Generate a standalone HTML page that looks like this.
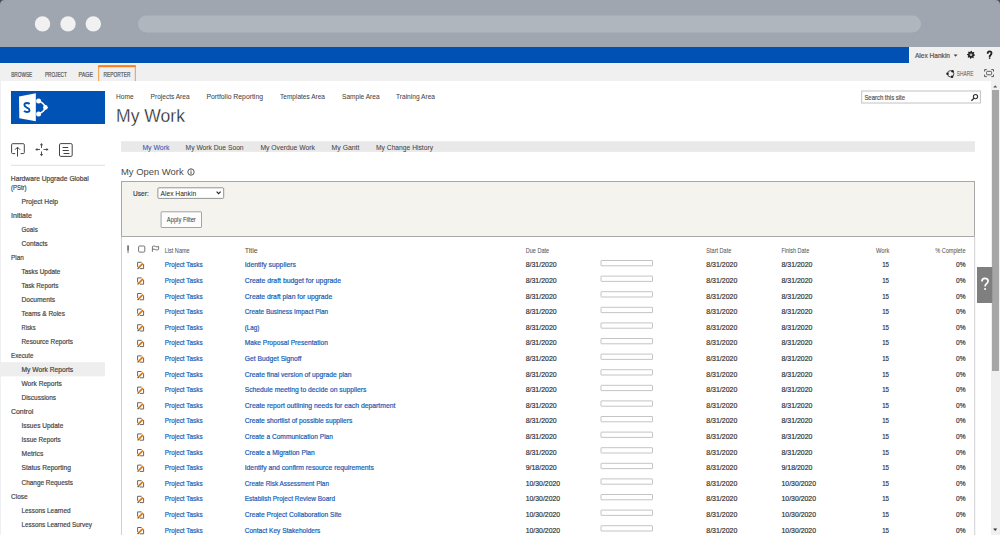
<!DOCTYPE html>
<html><head><meta charset="utf-8">
<style>
html,body{margin:0;padding:0;width:1000px;height:535px;overflow:hidden;background:#fff}
svg{display:block;font-family:"Liberation Sans", sans-serif}
</style></head><body>
<svg width="1000" height="535" viewBox="0 0 1000 535">
<rect x="0" y="0" width="1000" height="8" fill="#4b5057" />
<path d="M0 5 Q0 0 5 0 H995 Q1000 0 1000 5 V47 H0 Z" fill="#9fa6af"/>
<circle cx="42.5" cy="23.9" r="7.7" fill="#f1f1f1"/>
<circle cx="68" cy="23.9" r="7.7" fill="#f1f1f1"/>
<circle cx="93.3" cy="23.9" r="7.7" fill="#f1f1f1"/>
<rect x="138" y="15.5" width="783" height="17" rx="8.5" fill="#b0b6bd"/>
<rect x="0" y="47" width="1000" height="34" fill="#f0f0f0" />
<rect x="0" y="47" width="909" height="16" fill="#0051b3" />
<text x="915" y="57.5" font-size="6.8" fill="#555" textLength="35" lengthAdjust="spacingAndGlyphs"  stroke="#555" stroke-width="0.2">Alex Hankin</text>
<path d="M953.6 54.4 L957.6 54.4 L955.6 56.7 Z" fill="#444"/>
<path d="M975.00 54.80 L974.92 55.58 L973.77 55.95 L973.49 56.47 L973.83 57.63 L973.22 58.13 L972.15 57.57 L971.59 57.74 L971.00 58.80 L970.22 58.72 L969.85 57.57 L969.33 57.29 L968.17 57.63 L967.67 57.02 L968.23 55.95 L968.06 55.39 L967.00 54.80 L967.08 54.02 L968.23 53.65 L968.51 53.13 L968.17 51.97 L968.78 51.47 L969.85 52.03 L970.41 51.86 L971.00 50.80 L971.78 50.88 L972.15 52.03 L972.67 52.31 L973.83 51.97 L974.33 52.58 L973.77 53.65 L973.94 54.21 Z" fill="#222"/>
<circle cx="971" cy="54.8" r="1.4" fill="#bbb"/>
<path d="M987.7 53.7 Q987.7 51.4 989.6 51.4 Q991.5 51.4 991.5 53.3 Q991.5 54.5 990.4 55.2 Q989.6 55.8 989.6 56.9" fill="none" stroke="#222" stroke-width="1.8"/>
<circle cx="989.6" cy="58.1" r="0.85" fill="#222"/>
<text x="11.2" y="76.7" font-size="6.6" fill="#555" textLength="21" lengthAdjust="spacingAndGlyphs"  stroke="#555" stroke-width="0.2">BROWSE</text>
<text x="44.9" y="76.7" font-size="6.6" fill="#555" textLength="22" lengthAdjust="spacingAndGlyphs"  stroke="#555" stroke-width="0.2">PROJECT</text>
<text x="78.6" y="76.7" font-size="6.6" fill="#555" textLength="14.5" lengthAdjust="spacingAndGlyphs"  stroke="#555" stroke-width="0.2">PAGE</text>
<path d="M98.7 81 V66.2 H135.3 V81" fill="none" stroke="#f39a3a" stroke-width="1"/>
<rect x="98.2" y="65.2" width="37.6" height="2" fill="#f57c1f" />
<text x="103.6" y="76.7" font-size="6.6" fill="#555" textLength="26.8" lengthAdjust="spacingAndGlyphs"  stroke="#555" stroke-width="0.2">REPORTER</text>
<circle cx="950.7" cy="73.8" r="3.2" fill="none" stroke="#333" stroke-width="0.9"/>
<circle cx="952.54" cy="71.18" r="1.25" fill="#222"/>
<circle cx="947.50" cy="73.80" r="1.25" fill="#222"/>
<circle cx="952.05" cy="76.70" r="1.25" fill="#222"/>
<text x="956.8" y="75.9" font-size="6.4" fill="#555" textLength="16.8" lengthAdjust="spacingAndGlyphs" >SHARE</text>
<path d="M984.6 71.5 V69.6 H986.8 M991.3 69.6 H993.5 V71.5 M993.5 74.6 V76.6 H991.3 M986.8 76.6 H984.6 V74.6" fill="none" stroke="#555" stroke-width="1"/>
<rect x="986.6" y="71.3" width="5" height="3.5" rx="1" fill="none" stroke="#555" stroke-width="1"/>
<rect x="0" y="81" width="1" height="454" fill="#eef0f3" />
<rect x="991" y="81" width="9" height="454" fill="#f0f0f0" />
<path d="M993.2 87.6 L997.2 87.6 L995.2 85.2 Z" fill="#555"/>
<rect x="992" y="90" width="7" height="281" fill="#a6a6a6" />
<path d="M993.2 528.6 L997.2 528.6 L995.2 531 Z" fill="#333"/>
<rect x="11" y="91" width="94" height="33" fill="#0052b4" />
<path d="M19 96.6 L35.8 93.2 L35.8 121.3 L19.3 118.3 Z" fill="#fff"/>
<path d="M29.6 104.0 C28.9 103.3 28 102.95 26.9 102.95 C25.3 102.95 24.4 103.9 24.4 105.1 C24.4 106.5 25.6 107.0 26.9 107.6 C28.3 108.2 29.5 108.8 29.5 110.2 C29.5 111.4 28.5 112.0 26.9 112.0 C25.8 112.0 24.7 111.6 24.0 110.9" fill="none" stroke="#0052b4" stroke-width="1.9"/>
<path d="M38.6 100.9 Q44.3 103 45.4 107.4 Q44.3 111.8 38.6 113.9" fill="none" stroke="#fff" stroke-width="1.6"/>
<path d="M44.6 104.9 L47.9 107.4 L44.6 109.9 Z" fill="#fff"/>
<circle cx="38.6" cy="100.9" r="2.5" fill="#fff"/>
<circle cx="45.4" cy="107.4" r="2.3" fill="#fff"/>
<circle cx="38.6" cy="113.9" r="2.5" fill="#fff"/>
<g fill="none" stroke="#444" stroke-width="1"><path d="M15.2 153.6 H12.6 Q11.6 153.6 11.6 152.6 V144.7 Q11.6 143.7 12.6 143.7 H23.3 Q24.3 143.7 24.3 144.7 V152.6 Q24.3 153.6 23.3 153.6 H20.6"/><path d="M17.5 156.5 V147.3 M15 149.7 L17.5 147.2 L20 149.7"/><path d="M41.5 144.8 V148 M41.5 151.5 V154.8 M36.6 149.5 H40 M43.5 149.5 H47" stroke="#555"/><rect x="59.5" y="143.6" width="12.7" height="12.8" rx="1.3"/><path d="M62.6 147.5 H68.2 M62.6 150.5 H68.8 M63.5 153.5 H69.5"/></g>
<g fill="#444"><path d="M41.5 143 L39.9 145.2 H43.1 Z M41.5 156.2 L39.9 154 H43.1 Z M35.2 149.5 L37.4 147.9 V151.1 Z M48.6 149.5 L46.4 147.9 V151.1 Z"/></g>
<rect x="11" y="164.8" width="94" height="0.8" fill="#d6d6d6" />
<text x="10.8" y="181.3" font-size="7.4" fill="#444" textLength="78" lengthAdjust="spacingAndGlyphs"  stroke="#444" stroke-width="0.2">Hardware Upgrade Global</text>
<text x="10.9" y="189.9" font-size="7.4" fill="#444" textLength="15.7" lengthAdjust="spacingAndGlyphs"  stroke="#444" stroke-width="0.2">(PStr)</text>
<rect x="0" y="362.2" width="105" height="14.2" fill="#eeeeee" />
<text x="21.5" y="204.1" font-size="7.4" fill="#444" textLength="36.6" lengthAdjust="spacingAndGlyphs"  stroke="#444" stroke-width="0.2">Project Help</text>
<text x="11.0" y="218.12" font-size="7.4" fill="#444" textLength="20.9" lengthAdjust="spacingAndGlyphs"  stroke="#444" stroke-width="0.2">Initiate</text>
<text x="21.5" y="232.14" font-size="7.4" fill="#444" textLength="16.3" lengthAdjust="spacingAndGlyphs"  stroke="#444" stroke-width="0.2">Goals</text>
<text x="21.5" y="246.16" font-size="7.4" fill="#444" textLength="26.1" lengthAdjust="spacingAndGlyphs"  stroke="#444" stroke-width="0.2">Contacts</text>
<text x="11.0" y="260.18" font-size="7.4" fill="#444" textLength="12.7" lengthAdjust="spacingAndGlyphs"  stroke="#444" stroke-width="0.2">Plan</text>
<text x="21.5" y="274.2" font-size="7.4" fill="#444" textLength="38.9" lengthAdjust="spacingAndGlyphs"  stroke="#444" stroke-width="0.2">Tasks Update</text>
<text x="21.5" y="288.22" font-size="7.4" fill="#444" textLength="37.0" lengthAdjust="spacingAndGlyphs"  stroke="#444" stroke-width="0.2">Task Reports</text>
<text x="21.5" y="302.24" font-size="7.4" fill="#444" textLength="33.7" lengthAdjust="spacingAndGlyphs"  stroke="#444" stroke-width="0.2">Documents</text>
<text x="21.5" y="316.26" font-size="7.4" fill="#444" textLength="43.4" lengthAdjust="spacingAndGlyphs"  stroke="#444" stroke-width="0.2">Teams &amp; Roles</text>
<text x="21.5" y="330.28" font-size="7.4" fill="#444" textLength="14.0" lengthAdjust="spacingAndGlyphs"  stroke="#444" stroke-width="0.2">Risks</text>
<text x="21.5" y="344.3" font-size="7.4" fill="#444" textLength="51.4" lengthAdjust="spacingAndGlyphs"  stroke="#444" stroke-width="0.2">Resource Reports</text>
<text x="11.0" y="358.32" font-size="7.4" fill="#444" textLength="22.4" lengthAdjust="spacingAndGlyphs"  stroke="#444" stroke-width="0.2">Execute</text>
<text x="21.5" y="372.34" font-size="7.4" fill="#444" textLength="51.6" lengthAdjust="spacingAndGlyphs"  stroke="#444" stroke-width="0.2">My Work Reports</text>
<text x="21.5" y="386.36" font-size="7.4" fill="#444" textLength="40.3" lengthAdjust="spacingAndGlyphs"  stroke="#444" stroke-width="0.2">Work Reports</text>
<text x="21.5" y="400.38" font-size="7.4" fill="#444" textLength="34.5" lengthAdjust="spacingAndGlyphs"  stroke="#444" stroke-width="0.2">Discussions</text>
<text x="11.0" y="414.4" font-size="7.4" fill="#444" textLength="22.3" lengthAdjust="spacingAndGlyphs"  stroke="#444" stroke-width="0.2">Control</text>
<text x="21.5" y="428.42" font-size="7.4" fill="#444" textLength="41.8" lengthAdjust="spacingAndGlyphs"  stroke="#444" stroke-width="0.2">Issues Update</text>
<text x="21.5" y="442.44" font-size="7.4" fill="#444" textLength="39.3" lengthAdjust="spacingAndGlyphs"  stroke="#444" stroke-width="0.2">Issue Reports</text>
<text x="21.5" y="456.46" font-size="7.4" fill="#444" textLength="21.8" lengthAdjust="spacingAndGlyphs"  stroke="#444" stroke-width="0.2">Metrics</text>
<text x="21.5" y="470.48" font-size="7.4" fill="#444" textLength="49.5" lengthAdjust="spacingAndGlyphs"  stroke="#444" stroke-width="0.2">Status Reporting</text>
<text x="21.5" y="484.5" font-size="7.4" fill="#444" textLength="51.5" lengthAdjust="spacingAndGlyphs"  stroke="#444" stroke-width="0.2">Change Requests</text>
<text x="11.0" y="498.52" font-size="7.4" fill="#444" textLength="16.6" lengthAdjust="spacingAndGlyphs"  stroke="#444" stroke-width="0.2">Close</text>
<text x="21.5" y="512.54" font-size="7.4" fill="#444" textLength="49.0" lengthAdjust="spacingAndGlyphs"  stroke="#444" stroke-width="0.2">Lessons Learned</text>
<text x="21.5" y="526.56" font-size="7.4" fill="#444" textLength="70.4" lengthAdjust="spacingAndGlyphs"  stroke="#444" stroke-width="0.2">Lessons Learned Survey</text>
<text x="116" y="99.4" font-size="7.4" fill="#444" textLength="17.6" lengthAdjust="spacingAndGlyphs"  stroke="#444" stroke-width="0.05">Home</text>
<text x="150.6" y="99.4" font-size="7.4" fill="#444" textLength="39" lengthAdjust="spacingAndGlyphs"  stroke="#444" stroke-width="0.05">Projects Area</text>
<text x="206.4" y="99.4" font-size="7.4" fill="#444" textLength="56.6" lengthAdjust="spacingAndGlyphs"  stroke="#444" stroke-width="0.05">Portfolio Reporting</text>
<text x="280" y="99.4" font-size="7.4" fill="#444" textLength="45" lengthAdjust="spacingAndGlyphs"  stroke="#444" stroke-width="0.05">Templates Area</text>
<text x="342" y="99.4" font-size="7.4" fill="#444" textLength="37.6" lengthAdjust="spacingAndGlyphs"  stroke="#444" stroke-width="0.05">Sample Area</text>
<text x="396" y="99.4" font-size="7.4" fill="#444" textLength="39" lengthAdjust="spacingAndGlyphs"  stroke="#444" stroke-width="0.05">Training Area</text>
<text x="116" y="121.8" font-size="18.6" fill="#1e1e1e" textLength="69" lengthAdjust="spacingAndGlyphs" stroke="#fff" stroke-width="0.3">My Work</text>
<rect x="861.7" y="91" width="118.7" height="12" fill="#fff" stroke="#c2c2c2" stroke-width="1"/>
<text x="864.4" y="99.6" font-size="7.2" fill="#555" textLength="40.6" lengthAdjust="spacingAndGlyphs"  stroke="#555" stroke-width="0.2">Search this site</text>
<circle cx="975.5" cy="96.6" r="2.1" fill="none" stroke="#333" stroke-width="1.1"/><path d="M974 98.2 L971.4 100.8" stroke="#333" stroke-width="1.3"/>
<rect x="121" y="141.2" width="854" height="10.7" fill="#e9e9e9" />
<text x="142.4" y="150" font-size="7.2" fill="#1a58b2" textLength="27" lengthAdjust="spacingAndGlyphs"  stroke="#1a58b2" stroke-width="0.05">My Work</text>
<text x="185.6" y="150" font-size="7.2" fill="#444" textLength="58" lengthAdjust="spacingAndGlyphs"  stroke="#444" stroke-width="0.05">My Work Due Soon</text>
<text x="260.4" y="150" font-size="7.2" fill="#444" textLength="54.6" lengthAdjust="spacingAndGlyphs"  stroke="#444" stroke-width="0.05">My Overdue Work</text>
<text x="331.6" y="150" font-size="7.2" fill="#444" textLength="27.8" lengthAdjust="spacingAndGlyphs"  stroke="#444" stroke-width="0.05">My Gantt</text>
<text x="376" y="150" font-size="7.2" fill="#444" textLength="57" lengthAdjust="spacingAndGlyphs"  stroke="#444" stroke-width="0.05">My Change History</text>
<text x="121" y="175" font-size="9.8" fill="#4a4a4a" textLength="62.6" lengthAdjust="spacingAndGlyphs" >My Open Work</text>
<circle cx="191" cy="172" r="3.2" fill="none" stroke="#555" stroke-width="1"/><rect x="190.5" y="171.2" width="1" height="2.8" fill="#555"/><rect x="190.5" y="169.7" width="1" height="0.9" fill="#555"/>
<rect x="121.5" y="181.5" width="853" height="55" fill="#f4f3ed" stroke="#a8a8a8" stroke-width="1"/>
<text x="133.1" y="196" font-size="7" fill="#444" textLength="15.7" lengthAdjust="spacingAndGlyphs"  stroke="#444" stroke-width="0.2">User:</text>
<rect x="157.9" y="187.8" width="65.8" height="10.6" rx="1" fill="#fff" stroke="#888" stroke-width="0.9"/>
<text x="160.5" y="195.9" font-size="7.2" fill="#222" textLength="35.6" lengthAdjust="spacingAndGlyphs" >Alex Hankin</text>
<path d="M216.6 191.6 L218.6 193.6 L220.6 191.6" fill="none" stroke="#222" stroke-width="1.1"/>
<rect x="161.1" y="211.8" width="40.4" height="15.7" rx="0.5" fill="#fdfdfd" stroke="#999" stroke-width="0.9"/>
<text x="166.8" y="222" font-size="6.4" fill="#333" textLength="29" lengthAdjust="spacingAndGlyphs" >Apply Filter</text>
<rect x="121" y="236.5" width="1" height="298.5" fill="#d0d0d0" />
<rect x="974.2" y="236.5" width="1" height="298.5" fill="#d0d0d0" />
<rect x="127.4" y="245.4" width="1.3" height="5.4" fill="#444"/><rect x="127.4" y="251.5" width="1.3" height="1.1" fill="#444"/>
<rect x="138.6" y="246" width="6.2" height="6.1" rx="1" fill="none" stroke="#666" stroke-width="0.9"/>
<path d="M152.4 251.8 V246.5 Q154 245.3 155.6 246.5 Q157 247.5 158.6 246.3 V249.4 Q157 250.6 155.6 249.6 Q154 248.5 152.4 249.5" fill="none" stroke="#666" stroke-width="0.9"/>
<text x="164.7" y="252.8" font-size="6.8" fill="#555" textLength="25" lengthAdjust="spacingAndGlyphs"  stroke="#555" stroke-width="0.05">List Name</text>
<text x="244.7" y="252.8" font-size="6.8" fill="#555" textLength="13" lengthAdjust="spacingAndGlyphs"  stroke="#555" stroke-width="0.05">Title</text>
<text x="525.7" y="252.8" font-size="6.8" fill="#555" textLength="23.5" lengthAdjust="spacingAndGlyphs"  stroke="#555" stroke-width="0.05">Due Date</text>
<text x="706.3" y="252.8" font-size="6.8" fill="#555" textLength="25" lengthAdjust="spacingAndGlyphs"  stroke="#555" stroke-width="0.05">Start Date</text>
<text x="781.5" y="252.8" font-size="6.8" fill="#555" textLength="27.7" lengthAdjust="spacingAndGlyphs"  stroke="#555" stroke-width="0.05">Finish Date</text>
<text x="889.3" y="252.8" font-size="6.8" fill="#555" text-anchor="end" textLength="13.3" lengthAdjust="spacingAndGlyphs"  stroke="#555" stroke-width="0.05">Work</text>
<text x="965.5" y="252.8" font-size="6.8" fill="#555" text-anchor="end" textLength="30.3" lengthAdjust="spacingAndGlyphs"  stroke="#555" stroke-width="0.05">% Complete</text>
<path d="M141.6 262.30 H137.6 V266.90 M139.8 268.60 H143.6 V264.10" fill="none" stroke="#666" stroke-width="1.0"/>
<path d="M138.2 268.20 L142.9 263.30" stroke="#e0780e" stroke-width="1.8"/>
<path d="M137.6 268.80 L138.6 267.80" stroke="#555" stroke-width="1.2"/>
<text x="164.8" y="267.3" font-size="7.6" fill="#1659b4" textLength="37.8" lengthAdjust="spacingAndGlyphs"  stroke="#1659b4" stroke-width="0.2">Project Tasks</text>
<text x="244.7" y="267.3" font-size="7.6" fill="#1659b4" textLength="51.2" lengthAdjust="spacingAndGlyphs"  stroke="#1659b4" stroke-width="0.2">Identify suppliers</text>
<text x="525.7" y="267.3" font-size="7.6" fill="#333" textLength="31" lengthAdjust="spacingAndGlyphs"  stroke="#333" stroke-width="0.2">8/31/2020</text>
<rect x="601" y="260.50" width="51.5" height="5.3" rx="0.4" fill="#fff" stroke="#bdbdbd" stroke-width="0.9"/>
<text x="706.3" y="267.3" font-size="7.6" fill="#333" textLength="31" lengthAdjust="spacingAndGlyphs"  stroke="#333" stroke-width="0.2">8/31/2020</text>
<text x="781.5" y="267.3" font-size="7.6" fill="#333" textLength="31" lengthAdjust="spacingAndGlyphs"  stroke="#333" stroke-width="0.2">8/31/2020</text>
<text x="889" y="267.3" font-size="7.6" fill="#333" text-anchor="end" textLength="6.8" lengthAdjust="spacingAndGlyphs"  stroke="#333" stroke-width="0.2">15</text>
<text x="965.5" y="267.3" font-size="7.6" fill="#333" text-anchor="end" textLength="9.5" lengthAdjust="spacingAndGlyphs"  stroke="#333" stroke-width="0.2">0%</text>
<path d="M141.6 277.90 H137.6 V282.50 M139.8 284.20 H143.6 V279.70" fill="none" stroke="#666" stroke-width="1.0"/>
<path d="M138.2 283.80 L142.9 278.90" stroke="#e0780e" stroke-width="1.8"/>
<path d="M137.6 284.40 L138.6 283.40" stroke="#555" stroke-width="1.2"/>
<text x="164.8" y="282.9" font-size="7.6" fill="#1659b4" textLength="37.8" lengthAdjust="spacingAndGlyphs"  stroke="#1659b4" stroke-width="0.2">Project Tasks</text>
<text x="244.7" y="282.9" font-size="7.6" fill="#1659b4" textLength="96.3" lengthAdjust="spacingAndGlyphs"  stroke="#1659b4" stroke-width="0.2">Create draft budget for upgrade</text>
<text x="525.7" y="282.9" font-size="7.6" fill="#333" textLength="31" lengthAdjust="spacingAndGlyphs"  stroke="#333" stroke-width="0.2">8/31/2020</text>
<rect x="601" y="276.10" width="51.5" height="5.3" rx="0.4" fill="#fff" stroke="#bdbdbd" stroke-width="0.9"/>
<text x="706.3" y="282.9" font-size="7.6" fill="#333" textLength="31" lengthAdjust="spacingAndGlyphs"  stroke="#333" stroke-width="0.2">8/31/2020</text>
<text x="781.5" y="282.9" font-size="7.6" fill="#333" textLength="31" lengthAdjust="spacingAndGlyphs"  stroke="#333" stroke-width="0.2">8/31/2020</text>
<text x="889" y="282.9" font-size="7.6" fill="#333" text-anchor="end" textLength="6.8" lengthAdjust="spacingAndGlyphs"  stroke="#333" stroke-width="0.2">15</text>
<text x="965.5" y="282.9" font-size="7.6" fill="#333" text-anchor="end" textLength="9.5" lengthAdjust="spacingAndGlyphs"  stroke="#333" stroke-width="0.2">0%</text>
<path d="M141.6 293.50 H137.6 V298.10 M139.8 299.80 H143.6 V295.30" fill="none" stroke="#666" stroke-width="1.0"/>
<path d="M138.2 299.40 L142.9 294.50" stroke="#e0780e" stroke-width="1.8"/>
<path d="M137.6 300.00 L138.6 299.00" stroke="#555" stroke-width="1.2"/>
<text x="164.8" y="298.5" font-size="7.6" fill="#1659b4" textLength="37.8" lengthAdjust="spacingAndGlyphs"  stroke="#1659b4" stroke-width="0.2">Project Tasks</text>
<text x="244.7" y="298.5" font-size="7.6" fill="#1659b4" textLength="87.5" lengthAdjust="spacingAndGlyphs"  stroke="#1659b4" stroke-width="0.2">Create draft plan for upgrade</text>
<text x="525.7" y="298.5" font-size="7.6" fill="#333" textLength="31" lengthAdjust="spacingAndGlyphs"  stroke="#333" stroke-width="0.2">8/31/2020</text>
<rect x="601" y="291.70" width="51.5" height="5.3" rx="0.4" fill="#fff" stroke="#bdbdbd" stroke-width="0.9"/>
<text x="706.3" y="298.5" font-size="7.6" fill="#333" textLength="31" lengthAdjust="spacingAndGlyphs"  stroke="#333" stroke-width="0.2">8/31/2020</text>
<text x="781.5" y="298.5" font-size="7.6" fill="#333" textLength="31" lengthAdjust="spacingAndGlyphs"  stroke="#333" stroke-width="0.2">8/31/2020</text>
<text x="889" y="298.5" font-size="7.6" fill="#333" text-anchor="end" textLength="6.8" lengthAdjust="spacingAndGlyphs"  stroke="#333" stroke-width="0.2">15</text>
<text x="965.5" y="298.5" font-size="7.6" fill="#333" text-anchor="end" textLength="9.5" lengthAdjust="spacingAndGlyphs"  stroke="#333" stroke-width="0.2">0%</text>
<path d="M141.6 309.10 H137.6 V313.70 M139.8 315.40 H143.6 V310.90" fill="none" stroke="#666" stroke-width="1.0"/>
<path d="M138.2 315.00 L142.9 310.10" stroke="#e0780e" stroke-width="1.8"/>
<path d="M137.6 315.60 L138.6 314.60" stroke="#555" stroke-width="1.2"/>
<text x="164.8" y="314.1" font-size="7.6" fill="#1659b4" textLength="37.8" lengthAdjust="spacingAndGlyphs"  stroke="#1659b4" stroke-width="0.2">Project Tasks</text>
<text x="244.7" y="314.1" font-size="7.6" fill="#1659b4" textLength="83.5" lengthAdjust="spacingAndGlyphs"  stroke="#1659b4" stroke-width="0.2">Create Business Impact Plan</text>
<text x="525.7" y="314.1" font-size="7.6" fill="#333" textLength="31" lengthAdjust="spacingAndGlyphs"  stroke="#333" stroke-width="0.2">8/31/2020</text>
<rect x="601" y="307.30" width="51.5" height="5.3" rx="0.4" fill="#fff" stroke="#bdbdbd" stroke-width="0.9"/>
<text x="706.3" y="314.1" font-size="7.6" fill="#333" textLength="31" lengthAdjust="spacingAndGlyphs"  stroke="#333" stroke-width="0.2">8/31/2020</text>
<text x="781.5" y="314.1" font-size="7.6" fill="#333" textLength="31" lengthAdjust="spacingAndGlyphs"  stroke="#333" stroke-width="0.2">8/31/2020</text>
<text x="889" y="314.1" font-size="7.6" fill="#333" text-anchor="end" textLength="6.8" lengthAdjust="spacingAndGlyphs"  stroke="#333" stroke-width="0.2">15</text>
<text x="965.5" y="314.1" font-size="7.6" fill="#333" text-anchor="end" textLength="9.5" lengthAdjust="spacingAndGlyphs"  stroke="#333" stroke-width="0.2">0%</text>
<path d="M141.6 324.70 H137.6 V329.30 M139.8 331.00 H143.6 V326.50" fill="none" stroke="#666" stroke-width="1.0"/>
<path d="M138.2 330.60 L142.9 325.70" stroke="#e0780e" stroke-width="1.8"/>
<path d="M137.6 331.20 L138.6 330.20" stroke="#555" stroke-width="1.2"/>
<text x="164.8" y="329.7" font-size="7.6" fill="#1659b4" textLength="37.8" lengthAdjust="spacingAndGlyphs"  stroke="#1659b4" stroke-width="0.2">Project Tasks</text>
<text x="244.7" y="329.7" font-size="7.6" fill="#1659b4" textLength="14.7" lengthAdjust="spacingAndGlyphs"  stroke="#1659b4" stroke-width="0.2">(Lag)</text>
<text x="525.7" y="329.7" font-size="7.6" fill="#333" textLength="31" lengthAdjust="spacingAndGlyphs"  stroke="#333" stroke-width="0.2">8/31/2020</text>
<rect x="601" y="322.90" width="51.5" height="5.3" rx="0.4" fill="#fff" stroke="#bdbdbd" stroke-width="0.9"/>
<text x="706.3" y="329.7" font-size="7.6" fill="#333" textLength="31" lengthAdjust="spacingAndGlyphs"  stroke="#333" stroke-width="0.2">8/31/2020</text>
<text x="781.5" y="329.7" font-size="7.6" fill="#333" textLength="31" lengthAdjust="spacingAndGlyphs"  stroke="#333" stroke-width="0.2">8/31/2020</text>
<text x="889" y="329.7" font-size="7.6" fill="#333" text-anchor="end" textLength="6.8" lengthAdjust="spacingAndGlyphs"  stroke="#333" stroke-width="0.2">15</text>
<text x="965.5" y="329.7" font-size="7.6" fill="#333" text-anchor="end" textLength="9.5" lengthAdjust="spacingAndGlyphs"  stroke="#333" stroke-width="0.2">0%</text>
<path d="M141.6 340.30 H137.6 V344.90 M139.8 346.60 H143.6 V342.10" fill="none" stroke="#666" stroke-width="1.0"/>
<path d="M138.2 346.20 L142.9 341.30" stroke="#e0780e" stroke-width="1.8"/>
<path d="M137.6 346.80 L138.6 345.80" stroke="#555" stroke-width="1.2"/>
<text x="164.8" y="345.3" font-size="7.6" fill="#1659b4" textLength="37.8" lengthAdjust="spacingAndGlyphs"  stroke="#1659b4" stroke-width="0.2">Project Tasks</text>
<text x="244.7" y="345.3" font-size="7.6" fill="#1659b4" textLength="83.2" lengthAdjust="spacingAndGlyphs"  stroke="#1659b4" stroke-width="0.2">Make Proposal Presentation</text>
<text x="525.7" y="345.3" font-size="7.6" fill="#333" textLength="31" lengthAdjust="spacingAndGlyphs"  stroke="#333" stroke-width="0.2">8/31/2020</text>
<rect x="601" y="338.50" width="51.5" height="5.3" rx="0.4" fill="#fff" stroke="#bdbdbd" stroke-width="0.9"/>
<text x="706.3" y="345.3" font-size="7.6" fill="#333" textLength="31" lengthAdjust="spacingAndGlyphs"  stroke="#333" stroke-width="0.2">8/31/2020</text>
<text x="781.5" y="345.3" font-size="7.6" fill="#333" textLength="31" lengthAdjust="spacingAndGlyphs"  stroke="#333" stroke-width="0.2">8/31/2020</text>
<text x="889" y="345.3" font-size="7.6" fill="#333" text-anchor="end" textLength="6.8" lengthAdjust="spacingAndGlyphs"  stroke="#333" stroke-width="0.2">15</text>
<text x="965.5" y="345.3" font-size="7.6" fill="#333" text-anchor="end" textLength="9.5" lengthAdjust="spacingAndGlyphs"  stroke="#333" stroke-width="0.2">0%</text>
<path d="M141.6 355.90 H137.6 V360.50 M139.8 362.20 H143.6 V357.70" fill="none" stroke="#666" stroke-width="1.0"/>
<path d="M138.2 361.80 L142.9 356.90" stroke="#e0780e" stroke-width="1.8"/>
<path d="M137.6 362.40 L138.6 361.40" stroke="#555" stroke-width="1.2"/>
<text x="164.8" y="360.9" font-size="7.6" fill="#1659b4" textLength="37.8" lengthAdjust="spacingAndGlyphs"  stroke="#1659b4" stroke-width="0.2">Project Tasks</text>
<text x="244.7" y="360.9" font-size="7.6" fill="#1659b4" textLength="56.8" lengthAdjust="spacingAndGlyphs"  stroke="#1659b4" stroke-width="0.2">Get Budget Signoff</text>
<text x="525.7" y="360.9" font-size="7.6" fill="#333" textLength="31" lengthAdjust="spacingAndGlyphs"  stroke="#333" stroke-width="0.2">8/31/2020</text>
<rect x="601" y="354.10" width="51.5" height="5.3" rx="0.4" fill="#fff" stroke="#bdbdbd" stroke-width="0.9"/>
<text x="706.3" y="360.9" font-size="7.6" fill="#333" textLength="31" lengthAdjust="spacingAndGlyphs"  stroke="#333" stroke-width="0.2">8/31/2020</text>
<text x="781.5" y="360.9" font-size="7.6" fill="#333" textLength="31" lengthAdjust="spacingAndGlyphs"  stroke="#333" stroke-width="0.2">8/31/2020</text>
<text x="889" y="360.9" font-size="7.6" fill="#333" text-anchor="end" textLength="6.8" lengthAdjust="spacingAndGlyphs"  stroke="#333" stroke-width="0.2">15</text>
<text x="965.5" y="360.9" font-size="7.6" fill="#333" text-anchor="end" textLength="9.5" lengthAdjust="spacingAndGlyphs"  stroke="#333" stroke-width="0.2">0%</text>
<path d="M141.6 371.50 H137.6 V376.10 M139.8 377.80 H143.6 V373.30" fill="none" stroke="#666" stroke-width="1.0"/>
<path d="M138.2 377.40 L142.9 372.50" stroke="#e0780e" stroke-width="1.8"/>
<path d="M137.6 378.00 L138.6 377.00" stroke="#555" stroke-width="1.2"/>
<text x="164.8" y="376.5" font-size="7.6" fill="#1659b4" textLength="37.8" lengthAdjust="spacingAndGlyphs"  stroke="#1659b4" stroke-width="0.2">Project Tasks</text>
<text x="244.7" y="376.5" font-size="7.6" fill="#1659b4" textLength="106.7" lengthAdjust="spacingAndGlyphs"  stroke="#1659b4" stroke-width="0.2">Create final version of upgrade plan</text>
<text x="525.7" y="376.5" font-size="7.6" fill="#333" textLength="31" lengthAdjust="spacingAndGlyphs"  stroke="#333" stroke-width="0.2">8/31/2020</text>
<rect x="601" y="369.70" width="51.5" height="5.3" rx="0.4" fill="#fff" stroke="#bdbdbd" stroke-width="0.9"/>
<text x="706.3" y="376.5" font-size="7.6" fill="#333" textLength="31" lengthAdjust="spacingAndGlyphs"  stroke="#333" stroke-width="0.2">8/31/2020</text>
<text x="781.5" y="376.5" font-size="7.6" fill="#333" textLength="31" lengthAdjust="spacingAndGlyphs"  stroke="#333" stroke-width="0.2">8/31/2020</text>
<text x="889" y="376.5" font-size="7.6" fill="#333" text-anchor="end" textLength="6.8" lengthAdjust="spacingAndGlyphs"  stroke="#333" stroke-width="0.2">15</text>
<text x="965.5" y="376.5" font-size="7.6" fill="#333" text-anchor="end" textLength="9.5" lengthAdjust="spacingAndGlyphs"  stroke="#333" stroke-width="0.2">0%</text>
<path d="M141.6 387.10 H137.6 V391.70 M139.8 393.40 H143.6 V388.90" fill="none" stroke="#666" stroke-width="1.0"/>
<path d="M138.2 393.00 L142.9 388.10" stroke="#e0780e" stroke-width="1.8"/>
<path d="M137.6 393.60 L138.6 392.60" stroke="#555" stroke-width="1.2"/>
<text x="164.8" y="392.1" font-size="7.6" fill="#1659b4" textLength="37.8" lengthAdjust="spacingAndGlyphs"  stroke="#1659b4" stroke-width="0.2">Project Tasks</text>
<text x="244.7" y="392.1" font-size="7.6" fill="#1659b4" textLength="121.6" lengthAdjust="spacingAndGlyphs"  stroke="#1659b4" stroke-width="0.2">Schedule meeting to decide on suppliers</text>
<text x="525.7" y="392.1" font-size="7.6" fill="#333" textLength="31" lengthAdjust="spacingAndGlyphs"  stroke="#333" stroke-width="0.2">8/31/2020</text>
<rect x="601" y="385.30" width="51.5" height="5.3" rx="0.4" fill="#fff" stroke="#bdbdbd" stroke-width="0.9"/>
<text x="706.3" y="392.1" font-size="7.6" fill="#333" textLength="31" lengthAdjust="spacingAndGlyphs"  stroke="#333" stroke-width="0.2">8/31/2020</text>
<text x="781.5" y="392.1" font-size="7.6" fill="#333" textLength="31" lengthAdjust="spacingAndGlyphs"  stroke="#333" stroke-width="0.2">8/31/2020</text>
<text x="889" y="392.1" font-size="7.6" fill="#333" text-anchor="end" textLength="6.8" lengthAdjust="spacingAndGlyphs"  stroke="#333" stroke-width="0.2">15</text>
<text x="965.5" y="392.1" font-size="7.6" fill="#333" text-anchor="end" textLength="9.5" lengthAdjust="spacingAndGlyphs"  stroke="#333" stroke-width="0.2">0%</text>
<path d="M141.6 402.70 H137.6 V407.30 M139.8 409.00 H143.6 V404.50" fill="none" stroke="#666" stroke-width="1.0"/>
<path d="M138.2 408.60 L142.9 403.70" stroke="#e0780e" stroke-width="1.8"/>
<path d="M137.6 409.20 L138.6 408.20" stroke="#555" stroke-width="1.2"/>
<text x="164.8" y="407.7" font-size="7.6" fill="#1659b4" textLength="37.8" lengthAdjust="spacingAndGlyphs"  stroke="#1659b4" stroke-width="0.2">Project Tasks</text>
<text x="244.7" y="407.7" font-size="7.6" fill="#1659b4" textLength="150.7" lengthAdjust="spacingAndGlyphs"  stroke="#1659b4" stroke-width="0.2">Create report outlining needs for each department</text>
<text x="525.7" y="407.7" font-size="7.6" fill="#333" textLength="31" lengthAdjust="spacingAndGlyphs"  stroke="#333" stroke-width="0.2">8/31/2020</text>
<rect x="601" y="400.90" width="51.5" height="5.3" rx="0.4" fill="#fff" stroke="#bdbdbd" stroke-width="0.9"/>
<text x="706.3" y="407.7" font-size="7.6" fill="#333" textLength="31" lengthAdjust="spacingAndGlyphs"  stroke="#333" stroke-width="0.2">8/31/2020</text>
<text x="781.5" y="407.7" font-size="7.6" fill="#333" textLength="31" lengthAdjust="spacingAndGlyphs"  stroke="#333" stroke-width="0.2">8/31/2020</text>
<text x="889" y="407.7" font-size="7.6" fill="#333" text-anchor="end" textLength="6.8" lengthAdjust="spacingAndGlyphs"  stroke="#333" stroke-width="0.2">15</text>
<text x="965.5" y="407.7" font-size="7.6" fill="#333" text-anchor="end" textLength="9.5" lengthAdjust="spacingAndGlyphs"  stroke="#333" stroke-width="0.2">0%</text>
<path d="M141.6 418.30 H137.6 V422.90 M139.8 424.60 H143.6 V420.10" fill="none" stroke="#666" stroke-width="1.0"/>
<path d="M138.2 424.20 L142.9 419.30" stroke="#e0780e" stroke-width="1.8"/>
<path d="M137.6 424.80 L138.6 423.80" stroke="#555" stroke-width="1.2"/>
<text x="164.8" y="423.3" font-size="7.6" fill="#1659b4" textLength="37.8" lengthAdjust="spacingAndGlyphs"  stroke="#1659b4" stroke-width="0.2">Project Tasks</text>
<text x="244.7" y="423.3" font-size="7.6" fill="#1659b4" textLength="107.7" lengthAdjust="spacingAndGlyphs"  stroke="#1659b4" stroke-width="0.2">Create shortlist of possible suppliers</text>
<text x="525.7" y="423.3" font-size="7.6" fill="#333" textLength="31" lengthAdjust="spacingAndGlyphs"  stroke="#333" stroke-width="0.2">8/31/2020</text>
<rect x="601" y="416.50" width="51.5" height="5.3" rx="0.4" fill="#fff" stroke="#bdbdbd" stroke-width="0.9"/>
<text x="706.3" y="423.3" font-size="7.6" fill="#333" textLength="31" lengthAdjust="spacingAndGlyphs"  stroke="#333" stroke-width="0.2">8/31/2020</text>
<text x="781.5" y="423.3" font-size="7.6" fill="#333" textLength="31" lengthAdjust="spacingAndGlyphs"  stroke="#333" stroke-width="0.2">8/31/2020</text>
<text x="889" y="423.3" font-size="7.6" fill="#333" text-anchor="end" textLength="6.8" lengthAdjust="spacingAndGlyphs"  stroke="#333" stroke-width="0.2">15</text>
<text x="965.5" y="423.3" font-size="7.6" fill="#333" text-anchor="end" textLength="9.5" lengthAdjust="spacingAndGlyphs"  stroke="#333" stroke-width="0.2">0%</text>
<path d="M141.6 433.90 H137.6 V438.50 M139.8 440.20 H143.6 V435.70" fill="none" stroke="#666" stroke-width="1.0"/>
<path d="M138.2 439.80 L142.9 434.90" stroke="#e0780e" stroke-width="1.8"/>
<path d="M137.6 440.40 L138.6 439.40" stroke="#555" stroke-width="1.2"/>
<text x="164.8" y="438.9" font-size="7.6" fill="#1659b4" textLength="37.8" lengthAdjust="spacingAndGlyphs"  stroke="#1659b4" stroke-width="0.2">Project Tasks</text>
<text x="244.7" y="438.9" font-size="7.6" fill="#1659b4" textLength="88.3" lengthAdjust="spacingAndGlyphs"  stroke="#1659b4" stroke-width="0.2">Create a Communication Plan</text>
<text x="525.7" y="438.9" font-size="7.6" fill="#333" textLength="31" lengthAdjust="spacingAndGlyphs"  stroke="#333" stroke-width="0.2">8/31/2020</text>
<rect x="601" y="432.10" width="51.5" height="5.3" rx="0.4" fill="#fff" stroke="#bdbdbd" stroke-width="0.9"/>
<text x="706.3" y="438.9" font-size="7.6" fill="#333" textLength="31" lengthAdjust="spacingAndGlyphs"  stroke="#333" stroke-width="0.2">8/31/2020</text>
<text x="781.5" y="438.9" font-size="7.6" fill="#333" textLength="31" lengthAdjust="spacingAndGlyphs"  stroke="#333" stroke-width="0.2">8/31/2020</text>
<text x="889" y="438.9" font-size="7.6" fill="#333" text-anchor="end" textLength="6.8" lengthAdjust="spacingAndGlyphs"  stroke="#333" stroke-width="0.2">15</text>
<text x="965.5" y="438.9" font-size="7.6" fill="#333" text-anchor="end" textLength="9.5" lengthAdjust="spacingAndGlyphs"  stroke="#333" stroke-width="0.2">0%</text>
<path d="M141.6 449.50 H137.6 V454.10 M139.8 455.80 H143.6 V451.30" fill="none" stroke="#666" stroke-width="1.0"/>
<path d="M138.2 455.40 L142.9 450.50" stroke="#e0780e" stroke-width="1.8"/>
<path d="M137.6 456.00 L138.6 455.00" stroke="#555" stroke-width="1.2"/>
<text x="164.8" y="454.5" font-size="7.6" fill="#1659b4" textLength="37.8" lengthAdjust="spacingAndGlyphs"  stroke="#1659b4" stroke-width="0.2">Project Tasks</text>
<text x="244.7" y="454.5" font-size="7.6" fill="#1659b4" textLength="70.1" lengthAdjust="spacingAndGlyphs"  stroke="#1659b4" stroke-width="0.2">Create a Migration Plan</text>
<text x="525.7" y="454.5" font-size="7.6" fill="#333" textLength="31" lengthAdjust="spacingAndGlyphs"  stroke="#333" stroke-width="0.2">8/31/2020</text>
<rect x="601" y="447.70" width="51.5" height="5.3" rx="0.4" fill="#fff" stroke="#bdbdbd" stroke-width="0.9"/>
<text x="706.3" y="454.5" font-size="7.6" fill="#333" textLength="31" lengthAdjust="spacingAndGlyphs"  stroke="#333" stroke-width="0.2">8/31/2020</text>
<text x="781.5" y="454.5" font-size="7.6" fill="#333" textLength="31" lengthAdjust="spacingAndGlyphs"  stroke="#333" stroke-width="0.2">8/31/2020</text>
<text x="889" y="454.5" font-size="7.6" fill="#333" text-anchor="end" textLength="6.8" lengthAdjust="spacingAndGlyphs"  stroke="#333" stroke-width="0.2">15</text>
<text x="965.5" y="454.5" font-size="7.6" fill="#333" text-anchor="end" textLength="9.5" lengthAdjust="spacingAndGlyphs"  stroke="#333" stroke-width="0.2">0%</text>
<path d="M141.6 465.10 H137.6 V469.70 M139.8 471.40 H143.6 V466.90" fill="none" stroke="#666" stroke-width="1.0"/>
<path d="M138.2 471.00 L142.9 466.10" stroke="#e0780e" stroke-width="1.8"/>
<path d="M137.6 471.60 L138.6 470.60" stroke="#555" stroke-width="1.2"/>
<text x="164.8" y="470.1" font-size="7.6" fill="#1659b4" textLength="37.8" lengthAdjust="spacingAndGlyphs"  stroke="#1659b4" stroke-width="0.2">Project Tasks</text>
<text x="244.7" y="470.1" font-size="7.6" fill="#1659b4" textLength="129.1" lengthAdjust="spacingAndGlyphs"  stroke="#1659b4" stroke-width="0.2">Identify and confirm resource requirements</text>
<text x="525.7" y="470.1" font-size="7.6" fill="#333" textLength="31" lengthAdjust="spacingAndGlyphs"  stroke="#333" stroke-width="0.2">9/18/2020</text>
<rect x="601" y="463.30" width="51.5" height="5.3" rx="0.4" fill="#fff" stroke="#bdbdbd" stroke-width="0.9"/>
<text x="706.3" y="470.1" font-size="7.6" fill="#333" textLength="31" lengthAdjust="spacingAndGlyphs"  stroke="#333" stroke-width="0.2">8/31/2020</text>
<text x="781.5" y="470.1" font-size="7.6" fill="#333" textLength="31" lengthAdjust="spacingAndGlyphs"  stroke="#333" stroke-width="0.2">9/18/2020</text>
<text x="889" y="470.1" font-size="7.6" fill="#333" text-anchor="end" textLength="6.8" lengthAdjust="spacingAndGlyphs"  stroke="#333" stroke-width="0.2">15</text>
<text x="965.5" y="470.1" font-size="7.6" fill="#333" text-anchor="end" textLength="9.5" lengthAdjust="spacingAndGlyphs"  stroke="#333" stroke-width="0.2">0%</text>
<path d="M141.6 480.70 H137.6 V485.30 M139.8 487.00 H143.6 V482.50" fill="none" stroke="#666" stroke-width="1.0"/>
<path d="M138.2 486.60 L142.9 481.70" stroke="#e0780e" stroke-width="1.8"/>
<path d="M137.6 487.20 L138.6 486.20" stroke="#555" stroke-width="1.2"/>
<text x="164.8" y="485.7" font-size="7.6" fill="#1659b4" textLength="37.8" lengthAdjust="spacingAndGlyphs"  stroke="#1659b4" stroke-width="0.2">Project Tasks</text>
<text x="244.7" y="485.7" font-size="7.6" fill="#1659b4" textLength="84.3" lengthAdjust="spacingAndGlyphs"  stroke="#1659b4" stroke-width="0.2">Create Risk Assessment Plan</text>
<text x="525.7" y="485.7" font-size="7.6" fill="#333" textLength="34.5" lengthAdjust="spacingAndGlyphs"  stroke="#333" stroke-width="0.2">10/30/2020</text>
<rect x="601" y="478.90" width="51.5" height="5.3" rx="0.4" fill="#fff" stroke="#bdbdbd" stroke-width="0.9"/>
<text x="706.3" y="485.7" font-size="7.6" fill="#333" textLength="31" lengthAdjust="spacingAndGlyphs"  stroke="#333" stroke-width="0.2">8/31/2020</text>
<text x="781.5" y="485.7" font-size="7.6" fill="#333" textLength="34.5" lengthAdjust="spacingAndGlyphs"  stroke="#333" stroke-width="0.2">10/30/2020</text>
<text x="889" y="485.7" font-size="7.6" fill="#333" text-anchor="end" textLength="6.8" lengthAdjust="spacingAndGlyphs"  stroke="#333" stroke-width="0.2">15</text>
<text x="965.5" y="485.7" font-size="7.6" fill="#333" text-anchor="end" textLength="9.5" lengthAdjust="spacingAndGlyphs"  stroke="#333" stroke-width="0.2">0%</text>
<path d="M141.6 496.30 H137.6 V500.90 M139.8 502.60 H143.6 V498.10" fill="none" stroke="#666" stroke-width="1.0"/>
<path d="M138.2 502.20 L142.9 497.30" stroke="#e0780e" stroke-width="1.8"/>
<path d="M137.6 502.80 L138.6 501.80" stroke="#555" stroke-width="1.2"/>
<text x="164.8" y="501.3" font-size="7.6" fill="#1659b4" textLength="37.8" lengthAdjust="spacingAndGlyphs"  stroke="#1659b4" stroke-width="0.2">Project Tasks</text>
<text x="244.7" y="501.3" font-size="7.6" fill="#1659b4" textLength="90.4" lengthAdjust="spacingAndGlyphs"  stroke="#1659b4" stroke-width="0.2">Establish Project Review Board</text>
<text x="525.7" y="501.3" font-size="7.6" fill="#333" textLength="34.5" lengthAdjust="spacingAndGlyphs"  stroke="#333" stroke-width="0.2">10/30/2020</text>
<rect x="601" y="494.50" width="51.5" height="5.3" rx="0.4" fill="#fff" stroke="#bdbdbd" stroke-width="0.9"/>
<text x="706.3" y="501.3" font-size="7.6" fill="#333" textLength="31" lengthAdjust="spacingAndGlyphs"  stroke="#333" stroke-width="0.2">8/31/2020</text>
<text x="781.5" y="501.3" font-size="7.6" fill="#333" textLength="34.5" lengthAdjust="spacingAndGlyphs"  stroke="#333" stroke-width="0.2">10/30/2020</text>
<text x="889" y="501.3" font-size="7.6" fill="#333" text-anchor="end" textLength="6.8" lengthAdjust="spacingAndGlyphs"  stroke="#333" stroke-width="0.2">15</text>
<text x="965.5" y="501.3" font-size="7.6" fill="#333" text-anchor="end" textLength="9.5" lengthAdjust="spacingAndGlyphs"  stroke="#333" stroke-width="0.2">0%</text>
<path d="M141.6 511.90 H137.6 V516.50 M139.8 518.20 H143.6 V513.70" fill="none" stroke="#666" stroke-width="1.0"/>
<path d="M138.2 517.80 L142.9 512.90" stroke="#e0780e" stroke-width="1.8"/>
<path d="M137.6 518.40 L138.6 517.40" stroke="#555" stroke-width="1.2"/>
<text x="164.8" y="516.9" font-size="7.6" fill="#1659b4" textLength="37.8" lengthAdjust="spacingAndGlyphs"  stroke="#1659b4" stroke-width="0.2">Project Tasks</text>
<text x="244.7" y="516.9" font-size="7.6" fill="#1659b4" textLength="96.8" lengthAdjust="spacingAndGlyphs"  stroke="#1659b4" stroke-width="0.2">Create Project Collaboration Site</text>
<text x="525.7" y="516.9" font-size="7.6" fill="#333" textLength="34.5" lengthAdjust="spacingAndGlyphs"  stroke="#333" stroke-width="0.2">10/30/2020</text>
<rect x="601" y="510.10" width="51.5" height="5.3" rx="0.4" fill="#fff" stroke="#bdbdbd" stroke-width="0.9"/>
<text x="706.3" y="516.9" font-size="7.6" fill="#333" textLength="31" lengthAdjust="spacingAndGlyphs"  stroke="#333" stroke-width="0.2">8/31/2020</text>
<text x="781.5" y="516.9" font-size="7.6" fill="#333" textLength="34.5" lengthAdjust="spacingAndGlyphs"  stroke="#333" stroke-width="0.2">10/30/2020</text>
<text x="889" y="516.9" font-size="7.6" fill="#333" text-anchor="end" textLength="6.8" lengthAdjust="spacingAndGlyphs"  stroke="#333" stroke-width="0.2">15</text>
<text x="965.5" y="516.9" font-size="7.6" fill="#333" text-anchor="end" textLength="9.5" lengthAdjust="spacingAndGlyphs"  stroke="#333" stroke-width="0.2">0%</text>
<path d="M141.6 527.50 H137.6 V532.10 M139.8 533.80 H143.6 V529.30" fill="none" stroke="#666" stroke-width="1.0"/>
<path d="M138.2 533.40 L142.9 528.50" stroke="#e0780e" stroke-width="1.8"/>
<path d="M137.6 534.00 L138.6 533.00" stroke="#555" stroke-width="1.2"/>
<text x="164.8" y="532.5" font-size="7.6" fill="#1659b4" textLength="37.8" lengthAdjust="spacingAndGlyphs"  stroke="#1659b4" stroke-width="0.2">Project Tasks</text>
<text x="244.7" y="532.5" font-size="7.6" fill="#1659b4" textLength="75.7" lengthAdjust="spacingAndGlyphs"  stroke="#1659b4" stroke-width="0.2">Contact Key Stakeholders</text>
<text x="525.7" y="532.5" font-size="7.6" fill="#333" textLength="34.5" lengthAdjust="spacingAndGlyphs"  stroke="#333" stroke-width="0.2">10/30/2020</text>
<rect x="601" y="525.70" width="51.5" height="5.3" rx="0.4" fill="#fff" stroke="#bdbdbd" stroke-width="0.9"/>
<text x="706.3" y="532.5" font-size="7.6" fill="#333" textLength="31" lengthAdjust="spacingAndGlyphs"  stroke="#333" stroke-width="0.2">8/31/2020</text>
<text x="781.5" y="532.5" font-size="7.6" fill="#333" textLength="34.5" lengthAdjust="spacingAndGlyphs"  stroke="#333" stroke-width="0.2">10/30/2020</text>
<text x="889" y="532.5" font-size="7.6" fill="#333" text-anchor="end" textLength="6.8" lengthAdjust="spacingAndGlyphs"  stroke="#333" stroke-width="0.2">15</text>
<text x="965.5" y="532.5" font-size="7.6" fill="#333" text-anchor="end" textLength="9.5" lengthAdjust="spacingAndGlyphs"  stroke="#333" stroke-width="0.2">0%</text>
<rect x="977" y="267" width="15.3" height="36" fill="#7f7f7f" />
<path d="M981.9 281.4 Q981.9 278.4 985 278.4 Q988.1 278.4 988.1 281.1 Q988.1 282.7 986.5 283.7 Q985.1 284.6 985.1 286.4" fill="none" stroke="#fff" stroke-width="1.7"/>
<circle cx="985.1" cy="289" r="1.05" fill="#fff"/>
</svg>
</body></html>
